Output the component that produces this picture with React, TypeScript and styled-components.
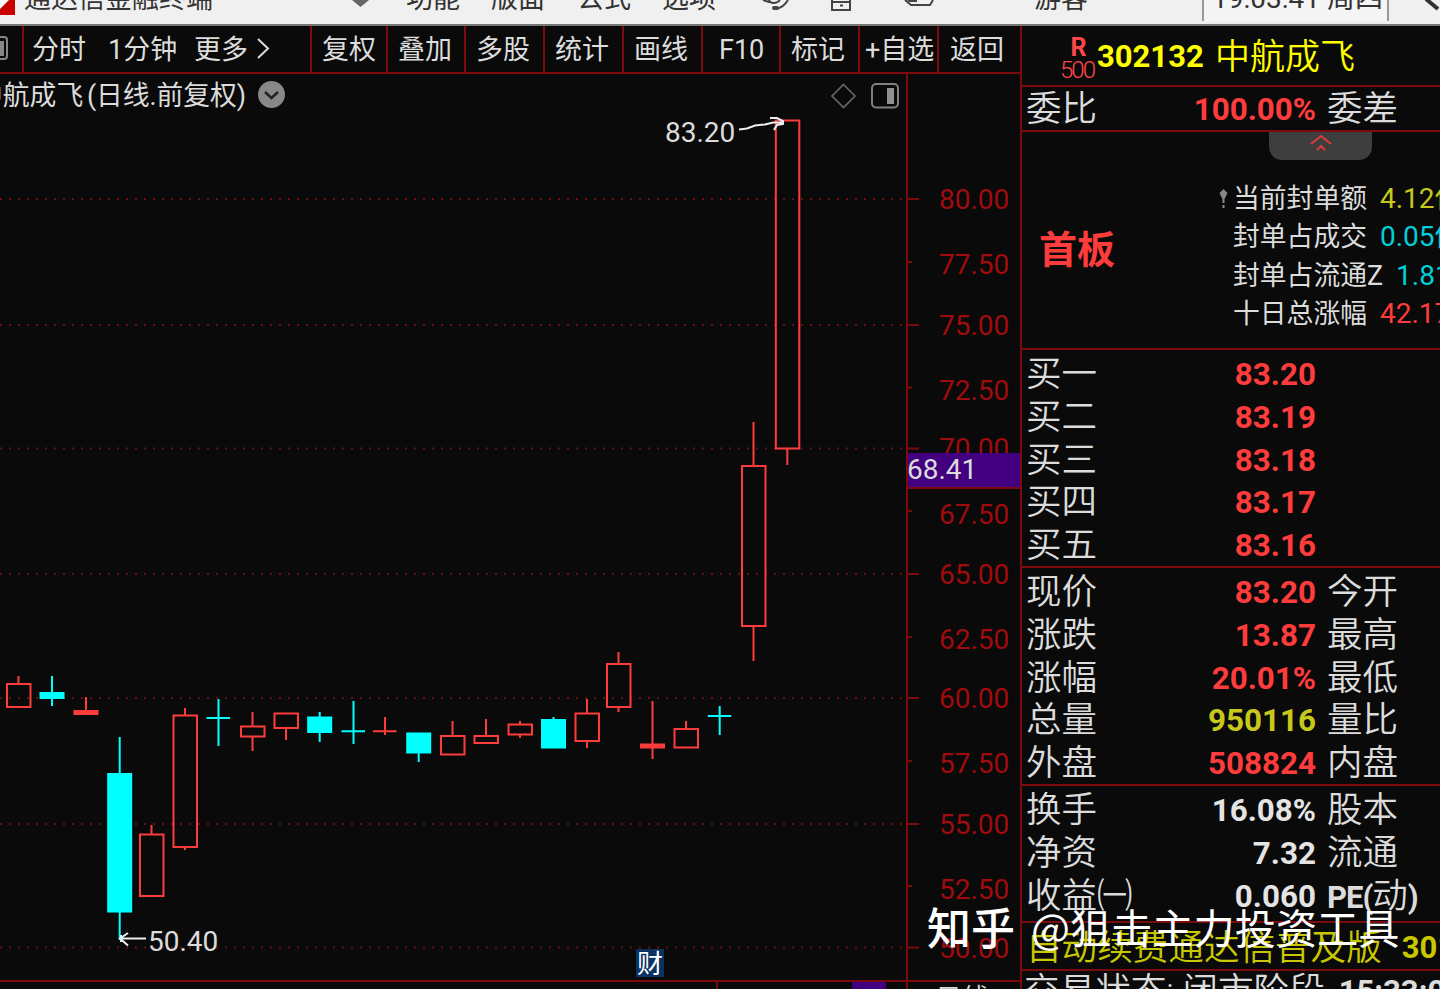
import React from 'react';
import styled, { createGlobalStyle } from 'styled-components';

const GlobalStyle = createGlobalStyle`
  body {
    margin: 0;
    background-color: #0a0a0a;
    font-family: Roboto, "Noto Sans CJK SC", sans-serif;
    font-weight: 350;
    color: #dcdcdc;
  }
  * { box-sizing: border-box; }
`;

const line = '#7c0a0c';
const red = '#ff3c3c';
const cyan = '#00ffff';

const Page = styled.div`
  position: relative;
  width: 1440px;
  height: 989px;
  overflow: hidden;
  display: flex;
  flex-direction: column;
  white-space: nowrap;
`;

const TitleBar = styled.header`
  display: flex;
  height: 26px;
  flex: none;
  overflow: hidden;
  background-color: #f0f0f0;
  border-bottom: 2px solid #777;
  color: #333;
  font-size: 27px;
  font-weight: 400;
  line-height: 34px;
`;

const TitleText = styled.span<{ $w: number }>`
  flex: none;
  width: ${props => props.$w}px;
  margin-top: -18px;
`;

const ClockBox = styled.div`
  width: 187px;
  height: 21px;
  padding-left: 8px;
  border-left: 2px solid #999;
  border-right: 2px solid #999;
  background-color: #f5f5f5;
`;

const Clock = styled.div`
  margin-top: -18px;
  font-size: 28px;
`;

const Body = styled.div`
  display: flex;
  flex: 1;
  min-height: 0;
`;

const Left = styled.main`
  width: 1022px;
  display: flex;
  flex-direction: column;
  border-right: 2px solid ${line};
`;

const Toolbar = styled.nav`
  display: flex;
  height: 48px;
  flex: none;
  border-bottom: 2px solid ${line};
  font-size: 27px;
  font-weight: 400;
  line-height: 49px;
`;

const Tool = styled.div<{ $w: number; $pad?: number }>`
  width: ${props => props.$w}px;
  flex: none;
  padding-left: ${props => props.$pad ?? 10}px;
  border-right: 2px solid ${line};
  display: flex;
  overflow: hidden;

  &:last-child {
    border-right: none;
  }
`;

const Period = styled.span<{ $w: number }>`
  width: ${props => props.$w}px;
`;

const Plot = styled.svg`
  display: block;
  flex: none;
`;

const Strip = styled.div`
  display: flex;
  height: 9px;
  flex: none;
  overflow: hidden;
  border-top: 2px solid ${line};
`;

const StripCell = styled.div<{ $w: number; $bg?: string }>`
  width: ${props => props.$w}px;
  flex: none;
  background-color: ${props => props.$bg || 'transparent'};
  border-right: ${props => (props.$bg ? 'none' : `2px solid ${line}`)};
`;

const StripText = styled.div`
  padding-left: 27px;
  font-size: 27px;
  line-height: 34px;
`;

const Side = styled.aside`
  flex: 1;
  min-width: 0;
  overflow: hidden;
`;

const StockHead = styled.div`
  display: flex;
  height: 61px;
  padding: 0 0 0 38px;
  border-bottom: 2px solid ${line};
  color: #ffff00;
  font-size: 35px;
  line-height: 64px;
`;

const Badge = styled.div`
  width: 37px;
  color: #ff4848;
  text-align: center;
  font-size: 25px;
  line-height: 23px;
  padding-top: 10px;
`;

const BadgeMark = styled.div`
  font-weight: 700;
`;

const BadgeNum = styled.div`
  font-size: 24px;
  letter-spacing: -2px;
  margin-left: -3px;
`;

const Code = styled.div`
  width: 118px;
  font-size: 31px;
  font-weight: 700;
  line-height: 61px;
`;

const Group = styled.section<{ $h: number; $top?: number }>`
  height: ${props => props.$h}px;
  padding-top: ${props => props.$top || 0}px;
  border-bottom: 2px solid ${line};
  overflow: hidden;
`;

const Row = styled.div`
  display: flex;
  height: 42.8px;
  line-height: 45px;
  font-size: 35.5px;
`;

const Label = styled.span`
  width: 144px;
  flex: none;
  padding-left: 4px;
`;

const Value = styled.span<{ $color?: string }>`
  width: 150px;
  flex: none;
  text-align: right;
  font-weight: 700;
  font-size: 31.4px;
  color: ${props => props.$color || '#e4e4e4'};
`;

const Second = styled.span`
  padding-left: 11px;

  b {
    font-size: 31px;
    font-weight: 700;
    letter-spacing: -1px;
  }
`;

const SealBox = styled.section`
  height: 218px;
  border-bottom: 2px solid ${line};
`;

const Handle = styled.div`
  display: flex;
  justify-content: center;
  width: 103px;
  height: 28px;
  margin-left: 247px;
  border-radius: 0 0 13px 13px;
  background-color: #3e3e3e;
`;

const SealBody = styled.div`
  display: flex;
  padding-top: 20px;
`;

const SealTitle = styled.div`
  flex: none;
  width: 194px;
  padding: 45px 0 0 17px;
  color: ${red};
  font-size: 38px;
  font-weight: 700;
  line-height: 50px;
`;

const SealList = styled.div`
  display: flex;
  flex: none;
  flex-direction: column;
  font-size: 26.8px;
  font-weight: 400;
  line-height: 38.4px;
`;

const SealLine = styled.div`
  display: flex;
`;

const Mark = styled.span`
  display: flex;
  align-items: center;
  width: 17px;
`;

const SealValue = styled.span<{ $color: string }>`
  margin-left: 13px;
  font-size: 28px;
  color: ${props => props.$color};
`;

const Notice = styled.div`
  display: flex;
  height: 48px;
  padding-left: 4px;
  border-bottom: 2px solid ${line};
  color: #c8c800;
  font-size: 35.6px;
  line-height: 50px;
`;

const Status = styled(Notice)`
  border-bottom: none;
  padding-left: 2px;
  color: #dcdcdc;
  line-height: 41px;
`;

const Bold = styled.b<{ $left: number }>`
  margin-left: ${props => props.$left}px;
  font-size: 31px;
  font-weight: 700;
`;

const Watermark = styled.div`
  position: absolute;
  left: 927px;
  top: 898px;
  display: flex;
  gap: 16px;
  color: #fff;
  font-family: "Noto Sans CJK SC", sans-serif;
  font-size: 41.2px;
  font-weight: 400;
  line-height: 56px;
`;

const Brand = styled.span`
  font-size: 44px;
  font-weight: 500;
`;

// centre x, high, body top, body bottom, low, kind
type Candle = [number, number, number, number, number, 'up' | 'down' | 'flatUp' | 'flatDown' | 'solidUp'];

const candles: Candle[] = [
  [18.5, 676, 684, 707, 707, 'up'],
  [52, 676, 692, 699, 706, 'down'],
  [86, 697, 710, 715, 715, 'solidUp'],
  [119.7, 737, 773, 912.5, 940, 'down'],
  [151.5, 825, 834.5, 896, 896, 'up'],
  [185, 708, 715.5, 847, 850, 'up'],
  [218.5, 699, 718, 718, 746, 'flatDown'],
  [252.5, 712, 726.5, 736.5, 751, 'up'],
  [286, 713, 713.5, 728, 740, 'up'],
  [319.7, 712, 716.5, 733, 742, 'down'],
  [353.5, 701, 731.3, 731.3, 744, 'flatDown'],
  [385, 717, 731.3, 731.3, 735, 'flatUp'],
  [418.7, 733, 732.5, 753.5, 762, 'down'],
  [452.5, 721, 736, 754.5, 754, 'up'],
  [486, 719, 736, 743, 743, 'up'],
  [520, 721, 724.5, 734.5, 738, 'up'],
  [553.5, 717, 719, 748.5, 748, 'down'],
  [587, 699, 713.5, 741, 748, 'up'],
  [618.5, 652, 664, 707, 712, 'up'],
  [652.5, 701, 743.5, 748.5, 759, 'solidUp'],
  [686, 721, 729, 747.5, 747, 'up'],
  [719.7, 706, 716, 716, 735, 'flatDown'],
  [753.5, 422, 466, 626, 661, 'up'],
  [787.3, 120, 120.5, 448.5, 465, 'up'],
];

const ticks: [string, number, number][] = [
  ['80.00', 199, 199],
  ['77.50', 264, 262],
  ['75.00', 325, 325],
  ['72.50', 390, 387.5],
  ['70.00', 448, 448.5],
  ['67.50', 514, 511],
  ['65.00', 574, 574],
  ['62.50', 639, 637],
  ['60.00', 697.5, 698],
  ['57.50', 763, 761],
  ['55.00', 824, 824],
  ['52.50', 889, 886],
  ['50.00', 948, 947.5],
];

function CandleMark({ data }: { data: Candle }) {
  const [x, high, top, bottom, low, kind] = data;
  const color = kind === 'down' || kind === 'flatDown' ? cyan : red;
  if (kind === 'flatUp' || kind === 'flatDown') {
    return <path d={`M${x} ${high}V${low}M${x - 12} ${top}h23.5`} stroke={color} strokeWidth="2" />;
  }
  if (kind === 'up') {
    return (
      <g stroke={color} strokeWidth="2" fill="none">
        <path d={`M${x} ${high}V${top}M${x} ${bottom}V${low}`} />
        <rect x={x - 11.5} y={top} width="23.5" height={bottom - top} />
      </g>
    );
  }
  return (
    <g>
      <path d={`M${x} ${high}V${low}`} stroke={color} strokeWidth="2" />
      <rect x={x - 12.5} y={top} width="25" height={bottom - top} fill={color} />
    </g>
  );
}

function Chart() {
  return (
    <Plot width="1020" height="906" viewBox="0 74 1020 906" fontSize="28" fontWeight="400" fill="#dcdcdc">
      {ticks.map(([label, y, tick], i) => (
        <g key={label}>
          {i % 2 === 0 && (
            <path d={`M0 ${tick}H904`} stroke="#681012" strokeWidth="2" strokeDasharray="2 7" />
          )}
          <path d={`M908 ${tick}h${i % 2 === 0 ? 11 : 4}`} stroke={line} strokeWidth="2" />
          <text x="939" y={y + 10} fill="#a00b0d">{label}</text>
        </g>
      ))}
      <path d="M907 74V981" stroke={line} strokeWidth="2" />
      <rect x="908" y="453" width="112" height="34" fill="#420080" />
      <path d="M908 488h112" stroke={line} strokeWidth="2" />
      <text x="907" y="479">68.41</text>

      {candles.map(c => <CandleMark key={c[0]} data={c} />)}

      <text x="-24" y="105" fontSize="26.8">中航成飞</text>
      <text x="87" y="105" fontSize="26.8" textLength="159">(日线.前复权)</text>
      <circle cx="271.5" cy="94.5" r="13.5" fill="#888" />
      <path d="M265 92l6.5 6 6.5-6" stroke="#222" strokeWidth="2.5" fill="none" />
      <path d="M843.5 84.5l11.5 11.5-11.5 11.5L832 96z" stroke="#686868" strokeWidth="1.6" fill="none" />
      <rect x="872" y="84" width="26" height="23.5" rx="4" stroke="#808080" strokeWidth="2" fill="none" />
      <rect x="887" y="88" width="7" height="16" fill="#909090" />

      <text x="665" y="142">83.20</text>
      <path d="M739 129.500l8-1 8-3 10-1 8-2h10M770 118h7l6 3v3l-6 1-3 5" stroke="#eee" strokeWidth="2" fill="none" />
      <text x="148" y="951">50.40</text>
      <path d="M146 938.5H120M128 933l-8 5.500 8 7M121 935v7" stroke="#eee" strokeWidth="2" fill="none" />

      <rect x="636" y="949" width="28" height="28" fill="#0a3262" />
      <text x="637" y="972.500" fontSize="26" fill="#fff">财</text>
    </Plot>
  );
}

type QuoteRow = [string, string, string?, React.ReactNode?];

function Quotes({ rows }: { rows: QuoteRow[] }) {
  return (
    <>
      {rows.map(([label, value, color, second]) => (
        <Row key={label}>
          <Label>{label}</Label>
          <Value $color={color}>{value}</Value>
          {second && <Second>{second}</Second>}
        </Row>
      ))}
    </>
  );
}

const bids: QuoteRow[] = [
  ['买一', '83.20', red],
  ['买二', '83.19', red],
  ['买三', '83.18', red],
  ['买四', '83.17', red],
  ['买五', '83.16', red],
];

const prices: QuoteRow[] = [
  ['现价', '83.20', red, '今开'],
  ['涨跌', '13.87', red, '最高'],
  ['涨幅', '20.01%', red, '最低'],
  ['总量', '950116', '#c8c81a', '量比'],
  ['外盘', '508824', red, '内盘'],
];

const basics: QuoteRow[] = [
  ['换手', '16.08%', undefined, '股本'],
  ['净资', '7.32', undefined, '流通'],
  ['收益㈠', '0.060', undefined, <><b>PE(</b>动<b>)</b></>],
];

const tools: [string, number, number][] = [
  ['复权', 76, 10],
  ['叠加', 78, 10],
  ['多股', 79, 10],
  ['统计', 79, 10],
  ['画线', 79, 10],
  ['F10', 78, 16],
  ['标记', 79, 10],
  ['+自选', 79, 5],
  ['返回', 81, 11],
];

function App() {
  return (
    <>
      <GlobalStyle />
      <Page>
        <TitleBar>
          <svg width="24" height="24">
            <path d="M0 0h15v15H0z" fill="#c80000" />
            <path d="M0 9L9 0H0z" fill="#fff" />
          </svg>
          <TitleText $w={328}>通达信金融终端</TitleText>
          <svg width="54" height="24"><path d="M0 0h17l-8.500 7z" fill="#666" /></svg>
          <TitleText $w={85}>功能</TitleText>
          <TitleText $w={86}>版面</TitleText>
          <TitleText $w={85}>公式</TitleText>
          <TitleText $w={90}>选项</TitleText>
          <svg width="282" height="24" stroke="#444" strokeWidth="2" fill="none">
            <path d="M11 0l6 2M17 0c1 4 8 4 11 0M36 0c-3 5-7 8-12 9" />
            <rect x="20" y="6" width="7" height="4" rx="2" fill="#444" stroke="none" />
            <rect x="80" y="-8" width="18" height="18" />
            <path d="M80 2h18M88 5.500h3" />
            <path d="M153 0l6 5h19l3-5" />
            <path d="M155 0h10v2h-8z" fill="#444" stroke="none" />
          </svg>
          <TitleText $w={168}>游客</TitleText>
          <ClockBox><Clock>19:03:41 周四</Clock></ClockBox>
          <svg width="51" height="24"><path d="M37 -1l12 10" stroke="#333" strokeWidth="4" /></svg>
        </TitleBar>
        <Body>
          <Left>
            <Toolbar>
              <Tool $w={24} $pad={0}>
                <svg width="10" height="46">
                  <rect x="-14" y="11" width="21" height="22" rx="3" fill="none" stroke="#888" strokeWidth="2" />
                  <rect x="-4" y="15" width="8" height="15" fill="#888" />
                </svg>
              </Tool>
              <Tool $w={288} $pad={8}>
                <Period $w={76}>分时</Period>
                <Period $w={86}>1分钟</Period>
                <Period $w={63}>更多</Period>
                <svg width="16" height="46">
                  <path d="M1 13l10 9.500L1 32" fill="none" stroke="#dcdcdc" strokeWidth="2" />
                </svg>
              </Tool>
              {tools.map(([name, w, pad]) => (
                <Tool key={name} $w={w} $pad={pad}>{name}</Tool>
              ))}
            </Toolbar>
            <Chart />
            <Strip>
              <StripCell $w={718} />
              <StripCell $w={134} $bg="#0a0a0a" />
              <StripCell $w={34} $bg="#420080" />
              <StripCell $w={22} />
              <StripText>日线</StripText>
            </Strip>
          </Left>
          <Side>
            <StockHead>
              <Badge>
                <BadgeMark>R</BadgeMark>
                <BadgeNum>500</BadgeNum>
              </Badge>
              <Code>302132</Code>
              中航成飞
            </StockHead>
            <Group $h={45}>
              <Quotes rows={[['委比', '100.00%', red, '委差']]} />
            </Group>
            <SealBox>
              <Handle>
                <svg width="24" height="24" fill="none" stroke="#e03c3c" strokeWidth="2">
                  <path d="M2 12l10-8 10 8M8 18l4-4 4 4" />
                </svg>
              </Handle>
              <SealBody>
                <SealTitle>首板</SealTitle>
                <SealList>
                  <SealLine>
                    <Mark>
                      <svg width="12" height="24"><path d="M7.500 2l4 4-3 6v4h-2v-4l-3-6zM6.500 18h2v3h-2z" fill="#888" /></svg>
                    </Mark>
                    当前封单额<SealValue $color="#c8c81a">4.12亿</SealValue>
                  </SealLine>
                  <SealLine><Mark />封单占成交<SealValue $color="#00d0d8">0.05倍</SealValue></SealLine>
                  <SealLine><Mark />封单占流通Z<SealValue $color="#00d0d8">1.81%</SealValue></SealLine>
                  <SealLine><Mark />十日总涨幅<SealValue $color={red}>42.17%</SealValue></SealLine>
                </SealList>
              </SealBody>
            </SealBox>
            <Group $h={218} $top={2}><Quotes rows={bids} /></Group>
            <Group $h={218} $top={2}><Quotes rows={prices} /></Group>
            <Group $h={137} $top={2}><Quotes rows={basics} /></Group>
            <Notice>自动续费通达信普及版<Bold $left={20}>301</Bold></Notice>
            <Status>交易状态: 闭市阶段<Bold $left={14}>15:33:01</Bold></Status>
          </Side>
        </Body>
        <Watermark>
          <Brand>知乎</Brand>
          <span>@狙击主力投资工具</span>
        </Watermark>
      </Page>
    </>
  );
}

export default App;
